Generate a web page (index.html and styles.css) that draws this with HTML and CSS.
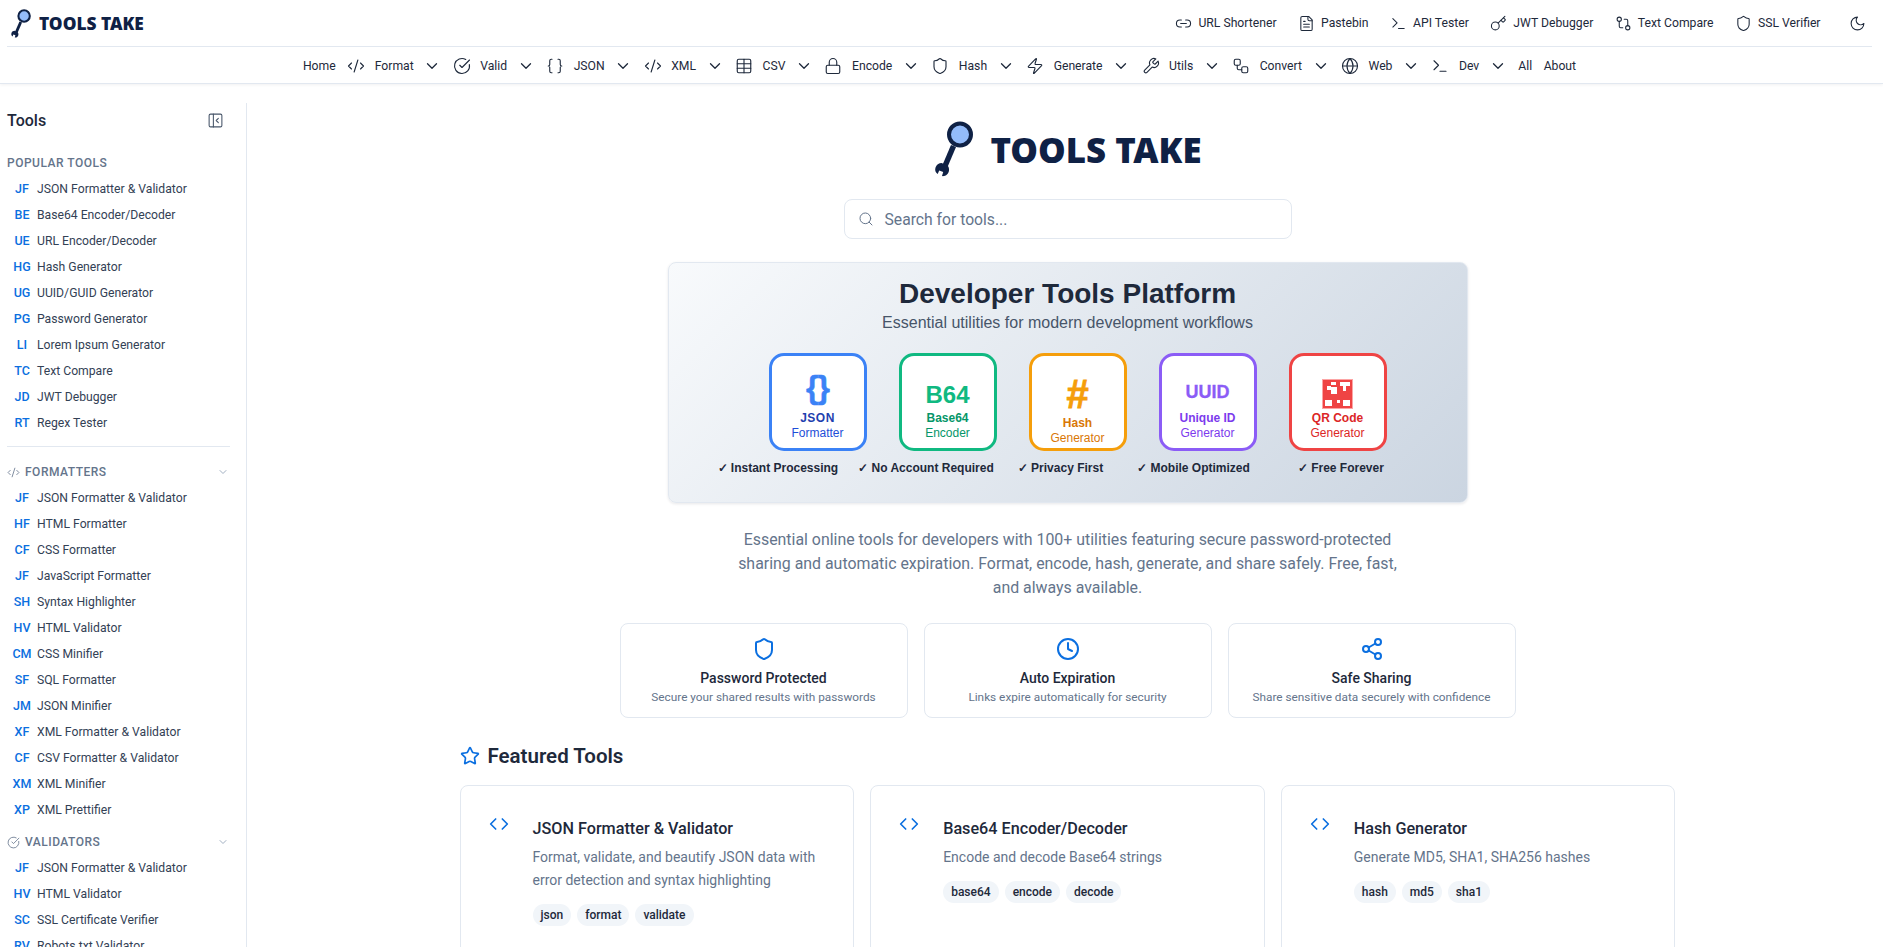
FILE: index.html
```html
<!DOCTYPE html>
<html lang="en">

<head>
    <meta charset="UTF-8">
    <meta name="viewport" content="width=device-width, initial-scale=1.0">
    <title>Tools Take</title>
    <link rel="stylesheet" href="styles.css">
</head>

<body>
    <svg class="sprite" xmlns="http://www.w3.org/2000/svg">
        <symbol id="i-code-xml" viewBox="0 0 24 24"><path d="m18 16 4-4-4-4"/><path d="m6 8-4 4 4 4"/><path d="m14.5 4-5 16"/></symbol>
        <symbol id="i-check" viewBox="0 0 24 24"><path d="M21.801 10A10 10 0 1 1 17 3.335"/><path d="m9 11 3 3L22 4"/></symbol>
        <symbol id="i-braces" viewBox="0 0 24 24"><path d="M8 3H7a2 2 0 0 0-2 2v5a2 2 0 0 1-2 2 2 2 0 0 1 2 2v5c0 1.1.9 2 2 2h1"/><path d="M16 21h1a2 2 0 0 0 2-2v-5c0-1.1.9-2 2-2a2 2 0 0 1-2-2V5a2 2 0 0 0-2-2h-1"/></symbol>
        <symbol id="i-table" viewBox="0 0 24 24"><rect x="3" y="3" width="18" height="18" rx="2"/><path d="M12 3v18"/><path d="M3 9h18"/><path d="M3 15h18"/></symbol>
        <symbol id="i-lock" viewBox="0 0 24 24"><rect x="3" y="11" width="18" height="11" rx="2"/><path d="M7 11V7a5 5 0 0 1 10 0v4"/></symbol>
        <symbol id="i-shield" viewBox="0 0 24 24"><path d="M20 13c0 5-3.5 7.5-7.66 8.95a1 1 0 0 1-.67-.01C7.5 20.5 4 18 4 13V6a1 1 0 0 1 1-1c2 0 4.5-1.2 6.24-2.72a1.17 1.17 0 0 1 1.52 0C14.51 3.81 17 5 19 5a1 1 0 0 1 1 1z"/></symbol>
        <symbol id="i-zap" viewBox="0 0 24 24"><path d="M4 14a1 1 0 0 1-.78-1.63l9.9-10.2a.5.5 0 0 1 .86.46l-1.92 6.02A1 1 0 0 0 13 10h7a1 1 0 0 1 .78 1.63l-9.9 10.2a.5.5 0 0 1-.86-.46l1.92-6.02A1 1 0 0 0 11 14z"/></symbol>
        <symbol id="i-wrench" viewBox="0 0 24 24"><path d="M14.7 6.3a1 1 0 0 0 0 1.4l1.6 1.6a1 1 0 0 0 1.4 0l3.77-3.77a6 6 0 0 1-7.94 7.94l-6.91 6.91a2.12 2.12 0 0 1-3-3l6.91-6.91a6 6 0 0 1 7.94-7.94l-3.76 3.76z"/></symbol>
        <symbol id="i-workflow" viewBox="0 0 24 24"><rect x="3" y="3" width="8" height="8" rx="2"/><path d="M7 11v4a2 2 0 0 0 2 2h4"/><rect x="13" y="13" width="8" height="8" rx="2"/></symbol>
        <symbol id="i-globe" viewBox="0 0 24 24"><circle cx="12" cy="12" r="10"/><path d="M12 2a14.5 14.5 0 0 0 0 20 14.5 14.5 0 0 0 0-20"/><path d="M2 12h20"/></symbol>
        <symbol id="i-terminal" viewBox="0 0 24 24"><path d="m4 17 6-6-6-6"/><path d="M12 19h8"/></symbol>
        <symbol id="i-chevron" viewBox="0 0 24 24"><path d="m6 9 6 6 6-6"/></symbol>
        <symbol id="i-link" viewBox="0 0 24 24"><path d="M9 17H7A5 5 0 0 1 7 7h2"/><path d="M15 7h2a5 5 0 1 1 0 10h-2"/><path d="M8 12h8"/></symbol>
        <symbol id="i-file" viewBox="0 0 24 24"><path d="M15 2H6a2 2 0 0 0-2 2v16a2 2 0 0 0 2 2h12a2 2 0 0 0 2-2V7Z"/><path d="M14 2v4a2 2 0 0 0 2 2h4"/><path d="M10 9H8"/><path d="M16 13H8"/><path d="M16 17H8"/></symbol>
        <symbol id="i-key" viewBox="0 0 24 24"><path d="m15.5 7.5 2.3 2.3a1 1 0 0 0 1.4 0l2.1-2.1a1 1 0 0 0 0-1.4L19 4"/><path d="m21 2-9.6 9.6"/><circle cx="7.5" cy="15.5" r="5.5"/></symbol>
        <symbol id="i-compare" viewBox="0 0 24 24"><circle cx="18" cy="18" r="3"/><circle cx="6" cy="6" r="3"/><path d="M13 6h3a2 2 0 0 1 2 2v7"/><path d="M11 18H8a2 2 0 0 1-2-2V9"/></symbol>
        <symbol id="i-moon" viewBox="0 0 24 24"><path d="M12 3a6 6 0 0 0 9 9 9 9 0 1 1-9-9Z"/></symbol>
        <symbol id="i-search" viewBox="0 0 24 24"><circle cx="11" cy="11" r="8"/><path d="m21 21-4.3-4.3"/></symbol>
        <symbol id="i-panel" viewBox="0 0 24 24"><rect x="3" y="3" width="18" height="18" rx="2"/><path d="M9 3v18"/><path d="m16 15-3-3 3-3"/></symbol>
        <symbol id="i-clock" viewBox="0 0 24 24"><circle cx="12" cy="12" r="10"/><path d="M12 6v6l4 2"/></symbol>
        <symbol id="i-share" viewBox="0 0 24 24"><circle cx="18" cy="5" r="3"/><circle cx="6" cy="12" r="3"/><circle cx="18" cy="19" r="3"/><path d="m8.59 13.51 6.83 3.98"/><path d="m15.41 6.51-6.82 3.98"/></symbol>
        <symbol id="i-star" viewBox="0 0 24 24"><path d="M11.525 2.295a.53.53 0 0 1 .95 0l2.31 4.679a2.123 2.123 0 0 0 1.595 1.16l5.166.756a.53.53 0 0 1 .294.904l-3.736 3.638a2.123 2.123 0 0 0-.611 1.878l.882 5.14a.53.53 0 0 1-.771.56l-4.618-2.428a2.122 2.122 0 0 0-1.973 0L6.396 21.01a.53.53 0 0 1-.77-.56l.881-5.139a2.122 2.122 0 0 0-.611-1.879L2.16 9.795a.53.53 0 0 1 .294-.906l5.165-.755a2.122 2.122 0 0 0 1.597-1.16z"/></symbol>
        <symbol id="i-code" viewBox="0 0 24 24"><path d="m16 18 6-6-6-6"/><path d="m8 6-6 6 6 6"/></symbol>
        <symbol id="i-logo" viewBox="0 0 42 56">
            <circle cx="27" cy="13.500" r="11" fill="#93bbfa" stroke="#0f2145" stroke-width="4"/>
            <path d="M20.500 25 12 45" fill="none" stroke="#0f2145" stroke-width="5.500"/>
            <path d="M3 45.500c-1.500 3-.8 6 1.700 7.500l1.500-3.600 4 1.500-1.200 4.200c3.800.4 6.500-2 7-5.500.3-2.200-.4-4-1.800-5.300l-5.700-2.300c-2.500.2-4.400 1.300-5.500 3.500z" fill="#0f2145"/>
        </symbol>
    </svg>

    <header class="site_header">
        <div class="top_row">
            <a class="brand">
                <svg class="brand_icon"><use href="#i-logo"/></svg>
                <span class="brand_text">TOOLS TAKE</span>
            </a>
            <div class="quick_links">
                <a><svg class="icon"><use href="#i-link"/></svg>URL Shortener</a>
                <a><svg class="icon"><use href="#i-file"/></svg>Pastebin</a>
                <a><svg class="icon"><use href="#i-terminal"/></svg>API Tester</a>
                <a><svg class="icon"><use href="#i-key"/></svg>JWT Debugger</a>
                <a><svg class="icon"><use href="#i-compare"/></svg>Text Compare</a>
                <a><svg class="icon"><use href="#i-shield"/></svg>SSL Verifier</a>
                <svg class="icon icon_moon"><use href="#i-moon"/></svg>
            </div>
        </div>
        <nav class="main_nav">
            <a class="nav_plain">Home</a>
            <a class="nav_item"><svg class="icon"><use href="#i-code-xml"/></svg>Format<svg class="chev"><use href="#i-chevron"/></svg></a>
            <a class="nav_item"><svg class="icon"><use href="#i-check"/></svg>Valid<svg class="chev"><use href="#i-chevron"/></svg></a>
            <a class="nav_item"><svg class="icon"><use href="#i-braces"/></svg>JSON<svg class="chev"><use href="#i-chevron"/></svg></a>
            <a class="nav_item"><svg class="icon"><use href="#i-code-xml"/></svg>XML<svg class="chev"><use href="#i-chevron"/></svg></a>
            <a class="nav_item"><svg class="icon"><use href="#i-table"/></svg>CSV<svg class="chev"><use href="#i-chevron"/></svg></a>
            <a class="nav_item"><svg class="icon"><use href="#i-lock"/></svg>Encode<svg class="chev"><use href="#i-chevron"/></svg></a>
            <a class="nav_item"><svg class="icon"><use href="#i-shield"/></svg>Hash<svg class="chev"><use href="#i-chevron"/></svg></a>
            <a class="nav_item"><svg class="icon"><use href="#i-zap"/></svg>Generate<svg class="chev"><use href="#i-chevron"/></svg></a>
            <a class="nav_item"><svg class="icon"><use href="#i-wrench"/></svg>Utils<svg class="chev"><use href="#i-chevron"/></svg></a>
            <a class="nav_item"><svg class="icon"><use href="#i-workflow"/></svg>Convert<svg class="chev"><use href="#i-chevron"/></svg></a>
            <a class="nav_item"><svg class="icon"><use href="#i-globe"/></svg>Web<svg class="chev"><use href="#i-chevron"/></svg></a>
            <a class="nav_item"><svg class="icon"><use href="#i-terminal"/></svg>Dev<svg class="chev"><use href="#i-chevron"/></svg></a>
            <a class="nav_plain">All</a>
            <a class="nav_plain">About</a>
        </nav>
    </header>

    <div class="layout">
        <aside class="sidebar">
            <div class="side_top">
                <span class="side_title">Tools</span>
                <svg class="icon icon_panel"><use href="#i-panel"/></svg>
            </div>

            <h3 class="side_head side_head_first">POPULAR TOOLS</h3>
            <ul class="side_list">
                <li><b>JF</b>JSON Formatter &amp; Validator</li>
                <li><b>BE</b>Base64 Encoder/Decoder</li>
                <li><b>UE</b>URL Encoder/Decoder</li>
                <li><b>HG</b>Hash Generator</li>
                <li><b>UG</b>UUID/GUID Generator</li>
                <li><b>PG</b>Password Generator</li>
                <li><b>LI</b>Lorem Ipsum Generator</li>
                <li><b>TC</b>Text Compare</li>
                <li><b>JD</b>JWT Debugger</li>
                <li><b>RT</b>Regex Tester</li>
            </ul>
            <div class="side_rule"></div>

            <h3 class="side_head"><svg class="icon"><use href="#i-code-xml"/></svg>FORMATTERS<svg class="chev"><use href="#i-chevron"/></svg></h3>
            <ul class="side_list">
                <li><b>JF</b>JSON Formatter &amp; Validator</li>
                <li><b>HF</b>HTML Formatter</li>
                <li><b>CF</b>CSS Formatter</li>
                <li><b>JF</b>JavaScript Formatter</li>
                <li><b>SH</b>Syntax Highlighter</li>
                <li><b>HV</b>HTML Validator</li>
                <li><b>CM</b>CSS Minifier</li>
                <li><b>SF</b>SQL Formatter</li>
                <li><b>JM</b>JSON Minifier</li>
                <li><b>XF</b>XML Formatter &amp; Validator</li>
                <li><b>CF</b>CSV Formatter &amp; Validator</li>
                <li><b>XM</b>XML Minifier</li>
                <li><b>XP</b>XML Prettifier</li>
            </ul>

            <h3 class="side_head side_head_next"><svg class="icon"><use href="#i-check"/></svg>VALIDATORS<svg class="chev"><use href="#i-chevron"/></svg></h3>
            <ul class="side_list">
                <li><b>JF</b>JSON Formatter &amp; Validator</li>
                <li><b>HV</b>HTML Validator</li>
                <li><b>SC</b>SSL Certificate Verifier</li>
                <li><b>RV</b>Robots.txt Validator</li>
            </ul>
        </aside>

        <main class="content">
            <div class="hero_logo">
                <svg class="hero_logo_icon"><use href="#i-logo"/></svg>
                <span class="hero_logo_text">TOOLS TAKE</span>
            </div>

            <div class="search">
                <svg class="icon"><use href="#i-search"/></svg>
                <span>Search for tools...</span>
            </div>

            <section class="hero">
                <h1>Developer Tools Platform</h1>
                <p class="hero_sub">Essential utilities for modern development workflows</p>
                <div class="hero_cards">
                    <div class="hero_card card_blue">
                        <div class="sym sym_braces">{}</div>
                        <strong>JSON</strong>
                        <span>Formatter</span>
                    </div>
                    <div class="hero_card card_green">
                        <div class="sym sym_b64">B64</div>
                        <strong>Base64</strong>
                        <span>Encoder</span>
                    </div>
                    <div class="hero_card card_orange">
                        <div class="sym sym_hash">#</div>
                        <strong>Hash</strong>
                        <span>Generator</span>
                    </div>
                    <div class="hero_card card_purple">
                        <div class="sym sym_uuid">UUID</div>
                        <strong>Unique ID</strong>
                        <span>Generator</span>
                    </div>
                    <div class="hero_card card_red">
                        <div class="sym">
                            <svg class="qr" viewBox="0 0 31 30">
                                <rect x=".5" y=".5" width="30" height="29" fill="#ef4444" stroke="#fca5a5"/>
                                <path d="M9 3h5v3H9zM18 3h10v4h-4v5h-3V7h-3zM5 7h4v4H5zM9 8h6v7H9zM3 21h7v6H3zM15 21h3v3h-3zM21 21h7v6h-7z" fill="#fff"/>
                            </svg>
                        </div>
                        <strong>QR Code</strong>
                        <span>Generator</span>
                    </div>
                </div>
                <div class="hero_checks">
                    <span>✓ Instant Processing</span>
                    <span>✓ No Account Required</span>
                    <span>✓ Privacy First</span>
                    <span>✓ Mobile Optimized</span>
                    <span>✓ Free Forever</span>
                </div>
            </section>

            <p class="intro">Essential online tools for developers with 100+ utilities featuring secure password-protected<br>sharing and automatic expiration. Format, encode, hash, generate, and share safely. Free, fast,<br>and always available.</p>

            <div class="features">
                <div class="feature">
                    <svg class="feature_icon"><use href="#i-shield"/></svg>
                    <h3>Password Protected</h3>
                    <p>Secure your shared results with passwords</p>
                </div>
                <div class="feature">
                    <svg class="feature_icon"><use href="#i-clock"/></svg>
                    <h3>Auto Expiration</h3>
                    <p>Links expire automatically for security</p>
                </div>
                <div class="feature">
                    <svg class="feature_icon"><use href="#i-share"/></svg>
                    <h3>Safe Sharing</h3>
                    <p>Share sensitive data securely with confidence</p>
                </div>
            </div>

            <h2 class="section_title"><svg class="star_icon"><use href="#i-star"/></svg>Featured Tools</h2>

            <div class="tool_grid">
                <article class="tool">
                    <svg class="tool_icon"><use href="#i-code"/></svg>
                    <div class="tool_body">
                        <h3>JSON Formatter &amp; Validator</h3>
                        <p>Format, validate, and beautify JSON data with<br>error detection and syntax highlighting</p>
                        <div class="tags"><span>json</span><span>format</span><span>validate</span></div>
                    </div>
                </article>
                <article class="tool">
                    <svg class="tool_icon"><use href="#i-code"/></svg>
                    <div class="tool_body">
                        <h3>Base64 Encoder/Decoder</h3>
                        <p>Encode and decode Base64 strings</p>
                        <div class="tags"><span>base64</span><span>encode</span><span>decode</span></div>
                    </div>
                </article>
                <article class="tool">
                    <svg class="tool_icon"><use href="#i-code"/></svg>
                    <div class="tool_body">
                        <h3>Hash Generator</h3>
                        <p>Generate MD5, SHA1, SHA256 hashes</p>
                        <div class="tags"><span>hash</span><span>md5</span><span>sha1</span></div>
                    </div>
                </article>
            </div>
        </main>
    </div>
</body>

</html>
```

FILE: styles.css
```css
* {
    margin: 0;
    padding: 0;
    box-sizing: border-box;
    list-style: none;
}

html,
body {
    height: 100%;
    overflow: hidden;
}

body {
    display: flex;
    flex-direction: column;
    background: #fff;
    color: #1e293b;
    font-family: Roboto, "Noto Sans", sans-serif;
    font-size: 12.2px;
}

.sprite {
    display: none;
}

.icon {
    width: 18px;
    height: 18px;
    flex: none;
    fill: none;
    stroke: currentColor;
    stroke-width: 1.5;
    stroke-linecap: round;
    stroke-linejoin: round;
}

.chev {
    width: 18px;
    height: 18px;
    flex: none;
    fill: none;
    stroke: currentColor;
    stroke-width: 1.75;
    stroke-linecap: round;
    stroke-linejoin: round;
}

/* header */
.site_header {
    flex: none;
    background: #fff;
    border-bottom: 1px solid #e2e8f0;
    box-shadow: 0 1px 3px rgba(15, 23, 42, .06);
}

.top_row {
    height: 47px;
    margin: 0 11px 0 7px;
    display: flex;
    justify-content: space-between;
    align-items: center;
    border-bottom: 1px solid #e2e8f0;
}

.brand {
    display: flex;
    align-items: center;
    gap: 7px;
    padding-left: 3px;
}

.brand_icon {
    width: 22px;
    height: 29px;
}

.brand_text {
    font-family: "Noto Sans", sans-serif;
    font-size: 17.300px;
    font-weight: 900;
    color: #0f2145;
}

.quick_links {
    display: flex;
    align-items: center;
    gap: 21.500px;
}

.quick_links a {
    display: flex;
    align-items: center;
    gap: 6px;
}

.quick_links .icon {
    width: 17px;
    height: 17px;
}

.quick_links .icon_moon {
    margin-left: 7px;
    margin-right: 6px;
}

.main_nav {
    height: 36px;
    padding: 1px 4px 0 0;
    display: flex;
    justify-content: center;
    align-items: center;
    gap: 11.500px;
}

.nav_item {
    display: flex;
    align-items: center;
    gap: 9.500px;
}

/* sidebar */
.layout {
    flex: 1;
    min-height: 0;
    display: flex;
}

.sidebar {
    width: 247px;
    flex: none;
    margin-top: 19px;
    padding: 0 16px 0 7px;
    border-right: 1px solid #e2e8f0;
    overflow: hidden;
}

.side_top {
    height: 35px;
    display: flex;
    justify-content: space-between;
    align-items: center;
}

.side_title {
    font-size: 16px;
    font-weight: 500;
}

.icon_panel {
    width: 17px;
    height: 17px;
    margin-right: 6px;
    color: #475569;
}

.side_head {
    height: 14px;
    margin-bottom: 6px;
    display: flex;
    align-items: center;
    gap: 5px;
    font-size: 12px;
    font-weight: 500;
    letter-spacing: .5px;
    color: #64748b;
}

.side_head_first {
    margin-top: 18px;
}

.side_head_next {
    margin-top: 12px;
}

.side_head .icon {
    width: 13px;
    height: 13px;
}

.side_head .chev {
    width: 12px;
    height: 12px;
    margin-left: auto;
    margin-right: 1px;
    color: #94a3b8;
}

.side_list li {
    height: 26px;
    padding-left: 3px;
    display: flex;
    align-items: center;
    gap: 3px;
    line-height: 16px;
    color: #334155;
    white-space: nowrap;
}

.side_list b {
    width: 24px;
    flex: none;
    text-align: center;
    font-size: 12.500px;
    font-weight: 500;
    color: #0b6fe0;
}

.side_rule {
    height: 1px;
    margin: 10px 0 18px;
    background: #e2e8f0;
}

/* main */
.content {
    flex: 1;
    min-width: 0;
    margin-left: 5px;
    padding: 37px 32px 0;
    display: flex;
    flex-direction: column;
    align-items: center;
    overflow: hidden;
}

.content > * {
    flex: none;
}

.hero_logo {
    display: flex;
    align-items: center;
    gap: 15px;
}

.hero_logo_icon {
    width: 42px;
    height: 56px;
}

.hero_logo_text {
    font-family: "Noto Sans", sans-serif;
    font-size: 34.800px;
    font-weight: 900;
    color: #0f2145;
}

.search {
    width: 448px;
    height: 40px;
    margin-top: 22px;
    padding-left: 13px;
    display: flex;
    align-items: center;
    gap: 11px;
    border: 1px solid #e2e8f0;
    border-radius: 8px;
    font-size: 15.700px;
    color: #64748b;
}

.search .icon {
    width: 16px;
    height: 16px;
}

.hero {
    width: 800px;
    height: 241px;
    margin-top: 23px;
    padding-top: 14px;
    border: 1px solid #e2e8f0;
    border-radius: 8px;
    background: linear-gradient(135deg, #f8fafc, #cbd5e1);
    box-shadow: 0 1px 3px rgba(15, 23, 42, .1);
    font-family: "Liberation Sans", Arial, sans-serif;
    text-align: center;
}

.hero h1 {
    font-size: 28px;
    line-height: 34px;
    font-weight: 700;
    color: #1e293b;
}

.hero_sub {
    margin-top: 2px;
    font-size: 16px;
    line-height: 20px;
    color: #475569;
}

.hero_cards {
    margin-top: 20px;
    padding-left: 20px;
    display: flex;
    justify-content: center;
    gap: 32px;
}

.hero_card {
    width: 98px;
    height: 98px;
    display: flex;
    flex-direction: column;
    align-items: center;
    border: 3px solid;
    border-radius: 15px;
    background: #fff;
    font-size: 12px;
    line-height: 15px;
}

.hero_card strong {
    font-weight: 700;
}

.sym {
    height: 55px;
    flex: none;
    display: flex;
    align-items: center;
    justify-content: center;
    padding-top: 8px;
    font-weight: 700;
}

.sym_braces {
    font-size: 32px;
    letter-spacing: -1px;
    -webkit-text-stroke: .5px;
}

.sym_b64 {
    font-size: 24px;
    padding-top: 22px;
}

.sym_hash {
    height: 60px;
    font-size: 40px;
    padding-top: 16px;
    -webkit-text-stroke: .8px;
}

.sym_uuid {
    font-size: 18px;
    padding-top: 18px;
    -webkit-text-stroke: .3px;
}

.qr {
    width: 31px;
    height: 30px;
    margin-top: 12px;
}

.card_blue {
    border-color: #3b82f6;
    color: #1e40af;
}

.card_blue strong {
    letter-spacing: .5px;
}

.card_blue .sym {
    color: #3b82f6;
}

.card_blue span {
    color: #1d4ed8;
}

.card_green {
    border-color: #10b981;
    color: #059669;
}

.card_green .sym {
    color: #10b981;
}

.card_orange {
    border-color: #f59e0b;
    color: #d97706;
}

.card_orange .sym {
    color: #f59e0b;
}

.card_purple {
    border-color: #8b5cf6;
    color: #7c3aed;
}

.card_purple .sym {
    color: #8b5cf6;
}

.card_red {
    border-color: #ef4444;
    color: #dc2626;
}

.hero_checks {
    margin-top: 8.500px;
    padding-left: 49px;
    display: flex;
    font-size: 12px;
    line-height: 16px;
    font-weight: 700;
    color: #1e293b;
    white-space: nowrap;
}

.hero_checks span:nth-child(2) {
    margin-left: 20px;
}

.hero_checks span:nth-child(3) {
    margin-left: 24px;
}

.hero_checks span:nth-child(4) {
    margin-left: 34px;
}

.hero_checks span:nth-child(5) {
    margin-left: 48px;
}

.intro {
    margin-top: 25px;
    font-size: 15.900px;
    line-height: 24px;
    text-align: center;
    color: #64748b;
}

.features {
    width: 896px;
    margin-top: 23px;
    display: grid;
    grid-template-columns: repeat(3, 1fr);
    gap: 16px;
}

.feature {
    height: 95px;
    padding-top: 13px;
    display: flex;
    flex-direction: column;
    align-items: center;
    border: 1px solid #e2e8f0;
    border-radius: 8px;
    text-align: center;
}

.feature_icon {
    width: 24px;
    height: 24px;
    flex: none;
    fill: none;
    stroke: #0b6fe0;
    stroke-width: 2;
    stroke-linecap: round;
    stroke-linejoin: round;
}

.feature h3 {
    margin-top: 7px;
    font-size: 14px;
    line-height: 20px;
    font-weight: 500;
}

.feature p {
    font-size: 11.800px;
    line-height: 18px;
    color: #64748b;
}

.section_title {
    width: 100%;
    max-width: 1216px;
    margin-top: 24px;
    display: flex;
    align-items: center;
    gap: 8px;
    font-size: 20.500px;
    line-height: 28px;
    font-weight: 600;
}

.star_icon {
    width: 20px;
    height: 20px;
    flex: none;
    fill: none;
    stroke: #0b6fe0;
    stroke-width: 2;
    stroke-linecap: round;
    stroke-linejoin: round;
}

.tool_grid {
    width: 100%;
    max-width: 1216px;
    margin-top: 15px;
    display: grid;
    grid-template-columns: repeat(3, 1fr);
    gap: 16px;
}

.tool {
    min-height: 240px;
    padding: 28px;
    display: flex;
    gap: 24px;
    border: 1px solid #e2e8f0;
    border-radius: 8px;
}

.tool_icon {
    width: 20px;
    height: 20px;
    flex: none;
    fill: none;
    stroke: #0b6fe0;
    stroke-width: 2;
    stroke-linecap: round;
    stroke-linejoin: round;
}

.tool_body h3 {
    margin-top: 3px;
    font-size: 16.200px;
    line-height: 24px;
    font-weight: 500;
}

.tool_body p {
    margin-top: 5px;
    font-size: 14px;
    line-height: 23px;
    color: #64748b;
}

.tags {
    margin-top: 12px;
    display: flex;
    gap: 6px;
}

.tags span {
    height: 22px;
    padding: 0 8px;
    display: flex;
    align-items: center;
    border-radius: 11px;
    background: #f1f5f9;
    font-size: 12px;
    font-weight: 500;
}
```
